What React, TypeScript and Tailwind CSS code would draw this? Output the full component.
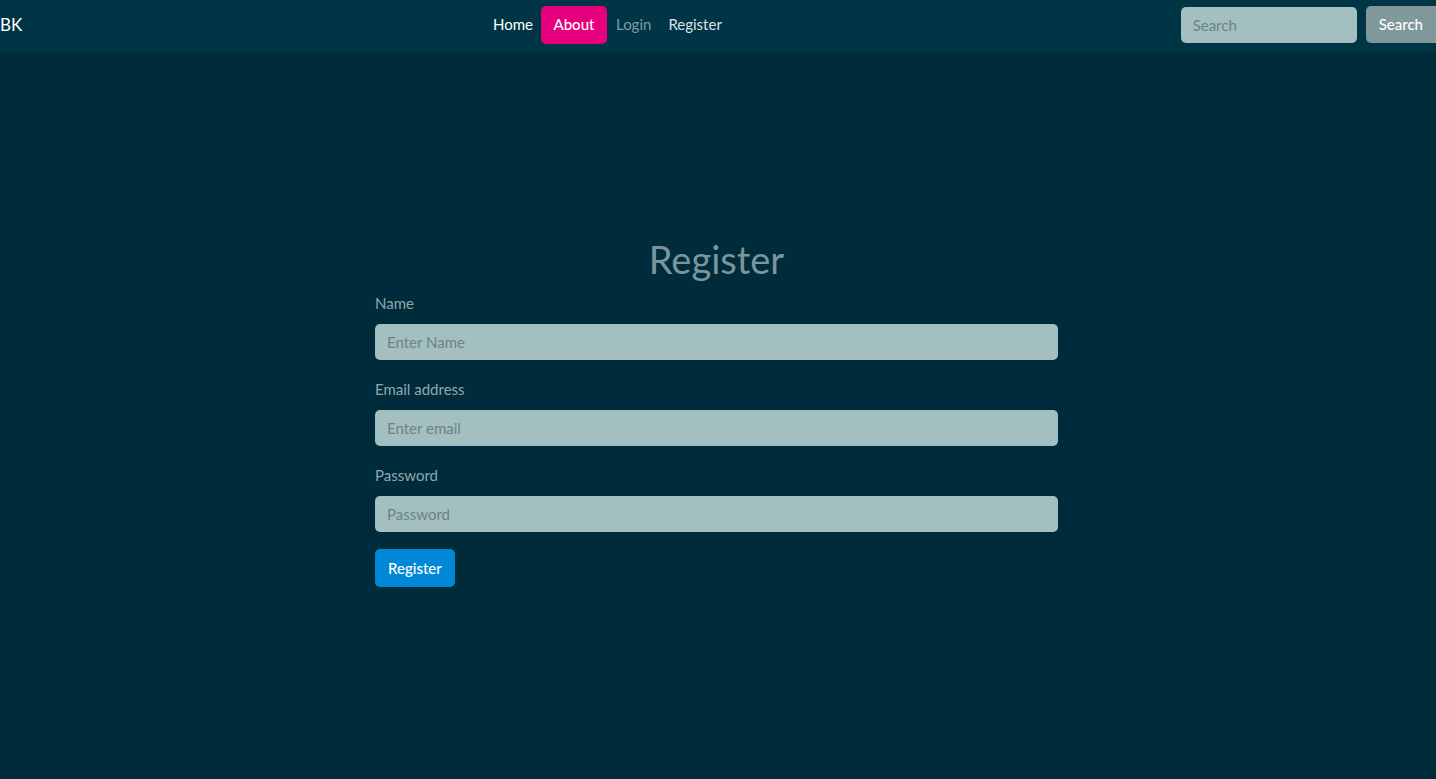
import React, { useState } from 'react';

const App: React.FC = () => {
  const [name, setName] = useState('');
  const [email, setEmail] = useState('');
  const [password, setPassword] = useState('');

  return (
    <div className="min-h-screen bg-[#002b3a] font-['Lato','Open_Sans',sans-serif]">
      <nav className="h-[53px] bg-[#003545] border-b border-[#002f3e] flex items-center pb-[3px]">
        <div className="w-[492px] flex items-center">
          <span className="text-white text-[17px]">BK</span>
        </div>
        <ul className="flex items-center gap-[8px] text-[15px]">
          <li className="px-[1px] text-white">Home</li>
          <li className="w-[66px] -ml-[1px] text-center pt-[8px] pb-[10px] rounded-[5px] bg-[#e6007e] text-white font-medium leading-[20px]">About</li>
          <li className="px-[1px] text-[#7f9aa2]">Login</li>
          <li className="px-[8px] text-[#d6e2e5]">Register</li>
        </ul>
        <div className="flex-1 flex items-center justify-end gap-[9px]">
          <input
            type="text"
            placeholder="Search"
            className="w-[176px] h-[36px] rounded-[5px] bg-[#a3bfbf] px-[12px] text-[15px] placeholder-[#6b8389] text-[#1c3a44] outline-none"
          />
          <button className="h-[37px] px-[13px] rounded-l-[5px] bg-[#7f9899] text-white text-[15px] font-medium">
            Search
          </button>
        </div>
      </nav>

      <div className="flex justify-center pr-[3px]">
        <div className="w-[683px] pt-[183px]">
          <h1 className="text-center text-[38px] text-[#7b959b] leading-[46px]">Register</h1>
          <form className="mt-[9px]" onSubmit={(e) => e.preventDefault()}>
            <div className="mb-[17px]">
              <label className="block text-[15px] leading-[24px] text-[#8fa8ae] mb-[9px]">Name</label>
              <input
                type="text"
                placeholder="Enter Name"
                value={name}
                onChange={(e) => setName(e.target.value)}
                className="w-full h-[36px] rounded-[5px] bg-[#a3bfbf] px-[12px] text-[15px] placeholder-[#6b8389] outline-none"
              />
            </div>
            <div className="mb-[17px]">
              <label className="block text-[15px] leading-[24px] text-[#8fa8ae] mb-[9px]">Email address</label>
              <input
                type="email"
                placeholder="Enter email"
                value={email}
                onChange={(e) => setEmail(e.target.value)}
                className="w-full h-[36px] rounded-[5px] bg-[#a3bfbf] px-[12px] text-[15px] placeholder-[#6b8389] outline-none"
              />
            </div>
            <div className="mb-[17px]">
              <label className="block text-[15px] leading-[24px] text-[#8fa8ae] mb-[9px]">Password</label>
              <input
                type="password"
                placeholder="Password"
                value={password}
                onChange={(e) => setPassword(e.target.value)}
                className="w-full h-[36px] rounded-[5px] bg-[#a3bfbf] px-[12px] text-[15px] placeholder-[#6b8389] outline-none"
              />
            </div>
            <button type="submit" className="h-[38px] px-[13px] rounded-[5px] bg-[#0088d6] text-white text-[15px] font-medium">
              Register
            </button>
          </form>
        </div>
      </div>
    </div>
  );
};

export default App;
